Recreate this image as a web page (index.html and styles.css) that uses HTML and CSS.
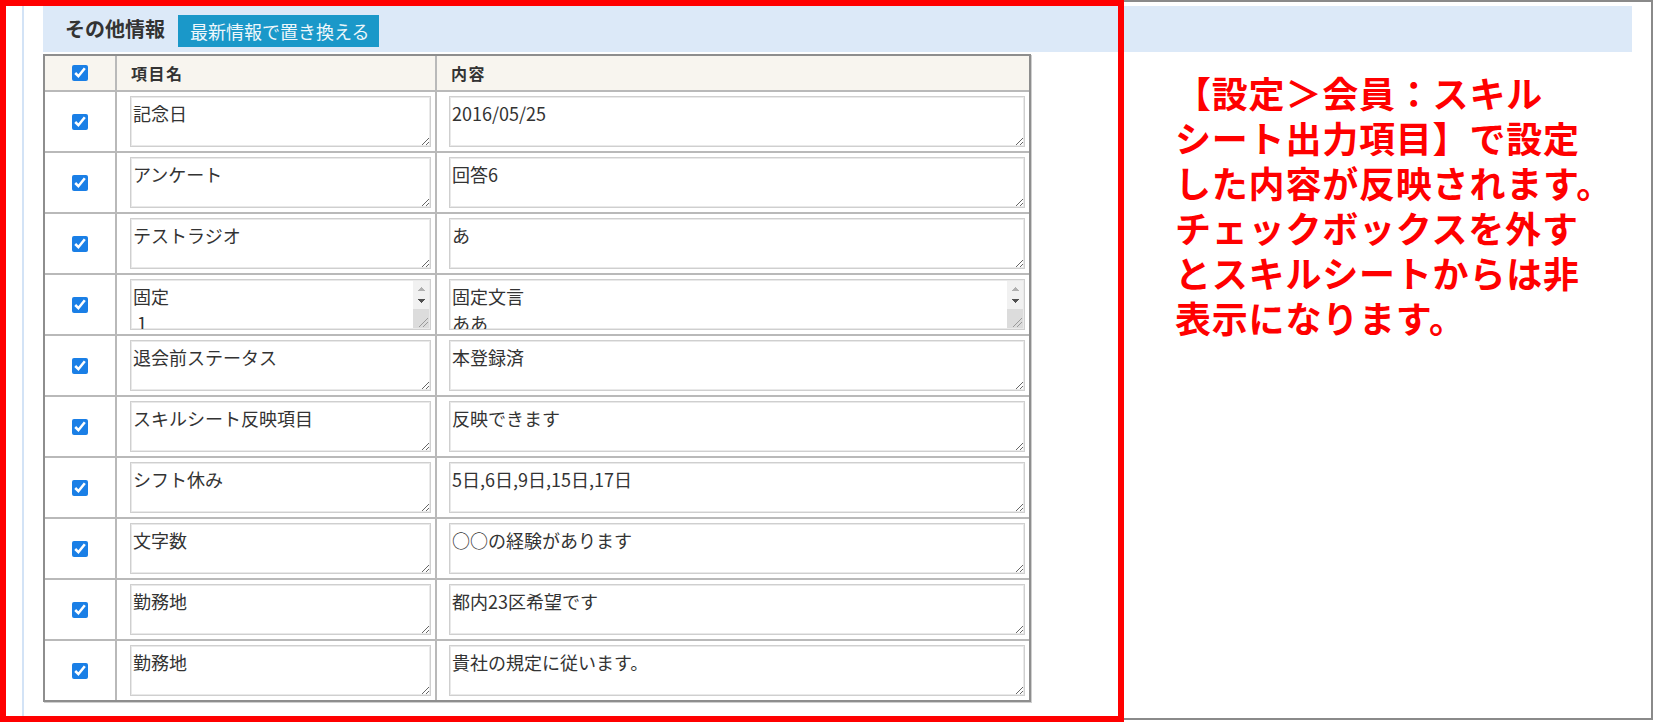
FILE: index.html
```html
<!DOCTYPE html>
<html lang="ja">
<head>
<meta charset="UTF-8">
<title>その他情報</title>
<link rel="stylesheet" href="styles.css">
</head>
<body>
<div class="shot">
  <div class="screen">
    <div class="page">
      <div class="section-head">
        <h2>その他情報</h2>
        <button type="button">最新情報で置き換える</button>
      </div>
      <table class="items">
        <colgroup>
          <col class="col-check">
          <col class="col-name">
          <col>
        </colgroup>
        <tr>
          <th class="check"><input type="checkbox" checked></th>
          <th>項目名</th>
          <th>内容</th>
        </tr>
        <tr>
          <td class="check"><input type="checkbox" checked></td>
          <td class="name"><textarea>記念日</textarea></td>
          <td><textarea>2016/05/25</textarea></td>
        </tr>
        <tr>
          <td class="check"><input type="checkbox" checked></td>
          <td class="name"><textarea>アンケート</textarea></td>
          <td><textarea>回答6</textarea></td>
        </tr>
        <tr>
          <td class="check"><input type="checkbox" checked></td>
          <td class="name"><textarea>テストラジオ</textarea></td>
          <td><textarea>あ</textarea></td>
        </tr>
        <tr>
          <td class="check"><input type="checkbox" checked></td>
          <td class="name">
            <div class="field">
              <textarea>固定
 1</textarea>
              <span class="vscroll"><i class="up"></i><i class="down"></i><i class="rest"></i></span>
            </div>
          </td>
          <td>
            <div class="field">
              <textarea>固定文言
ああ</textarea>
              <span class="vscroll"><i class="up"></i><i class="down"></i><i class="rest"></i></span>
            </div>
          </td>
        </tr>
        <tr>
          <td class="check"><input type="checkbox" checked></td>
          <td class="name"><textarea>退会前ステータス</textarea></td>
          <td><textarea>本登録済</textarea></td>
        </tr>
        <tr>
          <td class="check"><input type="checkbox" checked></td>
          <td class="name"><textarea>スキルシート反映項目</textarea></td>
          <td><textarea>反映できます</textarea></td>
        </tr>
        <tr>
          <td class="check"><input type="checkbox" checked></td>
          <td class="name"><textarea>シフト休み</textarea></td>
          <td><textarea>5日,6日,9日,15日,17日</textarea></td>
        </tr>
        <tr>
          <td class="check"><input type="checkbox" checked></td>
          <td class="name"><textarea>文字数</textarea></td>
          <td><textarea>○○の経験があります</textarea></td>
        </tr>
        <tr>
          <td class="check"><input type="checkbox" checked></td>
          <td class="name"><textarea>勤務地</textarea></td>
          <td><textarea>都内23区希望です</textarea></td>
        </tr>
        <tr>
          <td class="check"><input type="checkbox" checked></td>
          <td class="name"><textarea>勤務地</textarea></td>
          <td><textarea>貴社の規定に従います。</textarea></td>
        </tr>
      </table>
    </div>
  </div>
  <div class="callout"></div>
  <div class="note">
    <span>【設定＞会員：スキル</span>
    <span>シート出力項目】で設定</span>
    <span>した内容が反映されます。</span>
    <span>チェックボックスを外す</span>
    <span>とスキルシートからは非</span>
    <span>表示になります。</span>
  </div>
</div>
</body>
</html>
```

FILE: styles.css
```css
* {
  box-sizing: border-box;
}

body {
  margin: 0;
  background: #fff;
  font-family: "Noto Sans CJK JP", "Noto Sans", sans-serif;
  color: #333;
}

.shot {
  position: relative;
  width: 1655px;
  height: 722px;
  overflow: hidden;
}

/* captured window */
.screen {
  display: flex;
  width: 1653px;
  height: 720px;
  border: 2px solid #8a8a8a;
  border-left: 0;
  padding: 4px 19px 0 22px;
}

.page {
  flex: 1;
  border-left: 2px solid #d3e3f6;
  padding-left: 19px;
}

.section-head {
  display: flex;
  align-items: center;
  height: 46px;
  padding: 4px 0 0 22px;
  background: #dce9f8;
}

.section-head h2 {
  margin: 0 13px 5px 0;
  font-size: 20px;
  font-weight: bold;
  color: #333;
}

.section-head button {
  height: 32px;
  padding: 0 10px 0 12px;
  border: 0;
  border-radius: 0;
  background: #1a98c9;
  color: #eef7fb;
  font-family: inherit;
  font-size: 18px;
}

.items {
  margin-top: 2px;
  width: 988px;
  table-layout: fixed;
  border: 2px solid #8e8e8e;
  border-spacing: 0;
  box-shadow: 1px 1px 0 #cfcfcf;
}

.items .col-check {
  width: 72px;
}

.items .col-name {
  width: 320px;
}

.items th,
.items td {
  padding: 4px 4px 4px 12px;
  border-right: 2px solid #b9b9b9;
  border-bottom: 2px solid #b9b9b9;
  text-align: left;
  vertical-align: middle;
}

.items tr > :last-child {
  border-right: 0;
}

.items tr:last-child > * {
  border-bottom: 0;
}

.items th {
  height: 36px;
  padding-left: 14px;
  background: #f8f5ef;
  font-size: 16px;
  letter-spacing: 1.5px;
  color: #333;
}

.items td.name {
  padding-left: 13px;
}

.items .check {
  padding: 0;
}

.items .check input {
  display: block;
  width: 16px;
  height: 16px;
  margin: 0 auto;
  accent-color: #1a7fe6;
}

.items textarea {
  display: block;
  width: 100%;
  height: 51px;
  margin: 0;
  padding: 3px 2px;
  border: 1px solid #cfcfcf;
  box-shadow: inset 0 0 0 1px #e9e9e9;
  outline: none;
  font-family: inherit;
  font-size: 18px;
  line-height: 27px;
  color: #333;
}

/* field whose text runs past its height: draws the vertical scrollbar */
.field {
  position: relative;
}

.field textarea {
  padding-right: 20px;
}

.vscroll {
  position: absolute;
  top: 2px;
  right: 2px;
  bottom: 2px;
  width: 16px;
  display: flex;
  flex-direction: column;
  background: #f1f1f1;
  pointer-events: none;
}

.vscroll i {
  display: block;
  background-repeat: no-repeat;
}

.vscroll .up {
  height: 14px;
  background-image: conic-gradient(from 135deg at 50% 0, #b0b0b0 90deg, transparent 0);
  background-position: center 6px;
  background-size: 7px 4px;
}

.vscroll .down {
  height: 14px;
  background-image: conic-gradient(from -45deg at 50% 100%, #505050 90deg, transparent 0);
  background-position: center 4px;
  background-size: 7px 4px;
}

.vscroll .rest {
  flex: 1;
  background-color: #dcdcdc;
  background-image: linear-gradient(135deg, transparent 52%, #9a9a9a 52% 59%, transparent 59% 72%, #9a9a9a 72% 79%, transparent 79%);
  background-position: right 1px bottom 1px;
  background-size: 10px 10px;
}

/* red annotation frame and its note */
.callout {
  position: absolute;
  left: 0;
  top: 0;
  width: 1124px;
  height: 722px;
  border: 6px solid #f00;
}

.note {
  position: absolute;
  left: 1175px;
  top: 70px;
  display: flex;
  flex-direction: column;
  font-size: 36px;
  font-weight: bold;
  line-height: 45px;
  letter-spacing: 0.8px;
  color: #f00;
}

.note span {
  display: block;
  height: 45px;
  white-space: nowrap;
}
```
